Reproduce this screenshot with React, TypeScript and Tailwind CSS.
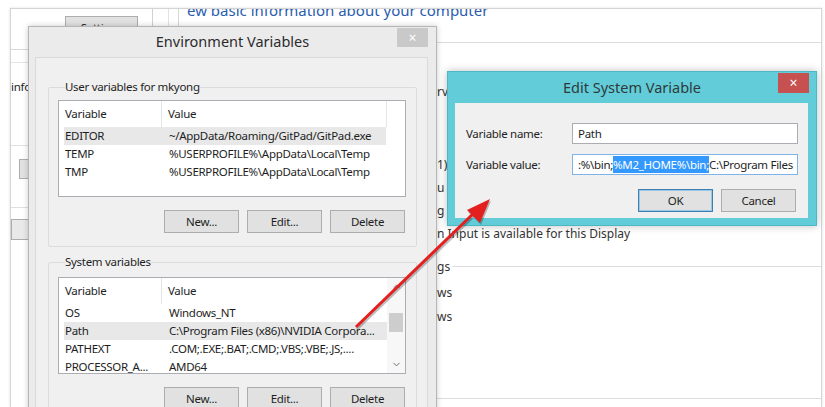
import React from 'react'
import { ChevronUp, ChevronDown } from 'lucide-react'

type Row = [string, string]

const userRows: Row[] = [
  ['EDITOR', '~/AppData/Roaming/GitPad/GitPad.exe'],
  ['TEMP', '%USERPROFILE%\\AppData\\Local\\Temp'],
  ['TMP', '%USERPROFILE%\\AppData\\Local\\Temp'],
]

const sysRows: Row[] = [
  ['OS', 'Windows_NT'],
  ['Path', 'C:\\Program Files (x86)\\NVIDIA Corpora...'],
  ['PATHEXT', '.COM;.EXE;.BAT;.CMD;.VBS;.VBE;.JS;....'],
  ['PROCESSOR_A...', 'AMD64'],
]

function Btn({ label, def }: { label: string; def?: boolean }) {
  return (
    <div
      className={`h-[23px] w-[75px] flex items-center justify-center bg-[#e1e1e1] border text-[#1e1e1e] ${
        def ? 'border-[#3c7fb1] shadow-[inset_0_0_0_1px_#9cc6e8]' : 'border-[#adadad]'
      }`}
    >
      {label}
    </div>
  )
}

function VarList({ rows, selected, scroll }: { rows: Row[]; selected: number; scroll?: boolean }) {
  return (
    <div className="w-[348px] h-[97px] border border-[#abadb3] bg-white flex overflow-hidden">
      <div className="flex-1 flex flex-col">
        <div className="h-[26px] shrink-0 flex items-stretch">
          <div className="w-[103px] pl-[6px] flex items-center border-r border-[#e5e5e5]">Variable</div>
          <div className="pl-[6px] flex items-center">Value</div>
        </div>
        {rows.map(([k, v], i) => (
          <div
            key={k}
            className={`h-[18px] shrink-0 flex items-center ml-[5px] whitespace-nowrap ${
              i === selected ? 'bg-[#e8e8e8]' : ''
            }`}
          >
            <div className="w-[98px] pl-[1px]">{k}</div>
            <div className="pl-[7px]">{v}</div>
          </div>
        ))}
      </div>
      {scroll ? (
        <div className="w-[18px] flex flex-col items-center bg-[#f7f7f7]">
          <div className="h-[17px] shrink-0 flex items-center justify-center text-[#606060]">
            <ChevronUp size={11} strokeWidth={2} />
          </div>
          <div className="flex-1 w-full flex flex-col items-center">
            <div className="mt-[18px] w-[14px] h-[19px] bg-[#cdcdcd]" />
          </div>
          <div className="h-[17px] shrink-0 flex items-center justify-center text-[#606060]">
            <ChevronDown size={11} strokeWidth={2} />
          </div>
        </div>
      ) : (
        <div className="w-[19px] h-[26px] border-l border-[#e5e5e5]" />
      )}
    </div>
  )
}

function Group({ title, rows, selected, scroll, top }: { title: string; rows: Row[]; selected: number; scroll?: boolean; top: string }) {
  return (
    <fieldset className={`w-[369px] border border-[#dcdcdc] rounded-[2px] pl-[9px] pr-[10px] pb-[13px] ${top}`}>
      <legend className="ml-[7px] leading-[16px] text-[#1e1e1e]">{title}</legend>
      <VarList rows={rows} selected={selected} scroll={scroll} />
      <div className="mt-[13px] flex justify-end gap-[8px] pr-[1px]">
        <Btn label="New..." />
        <Btn label="Edit..." />
        <Btn label="Delete" />
      </div>
    </fieldset>
  )
}

export default function App() {
  return (
    <div className="relative w-[825px] h-[407px] overflow-hidden bg-white text-[11.5px] tracking-[-0.3px] text-[#1e1e1e] font-['Noto_Sans',sans-serif]">
      {/* screenshot frame */}
      <div className="absolute left-[10px] top-[8px] right-[3px] bottom-0 border-t border-l border-r border-[#d4d4d4] shadow-[0_0_3px_rgba(0,0,0,0.12)]" />

      {/* left window, mostly hidden */}
      <div className="absolute left-[11px] top-[9px] w-[158px] bottom-0 flex flex-col border-r border-[#e2e2e2]">
        <div className="h-[41px] shrink-0 flex border-b border-[#d9d9d9]">
          <div className="ml-[54px] mt-[7px] w-[73px] h-[24px] bg-[#e1e1e1] border border-[#adadad] flex items-center justify-center">
            Settings
          </div>
          <div className="ml-auto mr-[15px] w-px bg-[#d0d0d0]" />
        </div>
        <div className="h-[13px] shrink-0 border-b border-[#e4e4e4]" />
        <div className="mt-[16px] h-[16px] flex items-center">info</div>
        <div className="h-[51px] shrink-0 border-b border-[#e0e0e0]" />
        <div className="mt-[13px] ml-[8px] w-[30px] h-[20px] bg-[#e1e1e1] border border-[#adadad]" />
        <div className="h-[29px] shrink-0 border-b border-[#e0e0e0]" />
        <div className="mt-[11px] w-[40px] h-[21px] bg-[#e9e9e9] border border-[#adadad]" />
      </div>

      {/* control panel behind */}
      <div className="absolute left-[178px] top-[9px] right-[3px] bottom-0 bg-white border-l border-r border-[#d6d6d6] flex flex-col">
        <div className="h-[34px] shrink-0 overflow-hidden border-b border-[#dcdcdc] pl-[8px]">
          <div className="-mt-[9px] text-[15px] tracking-normal leading-[20px] text-[#2a5db0] whitespace-nowrap">
            ew basic information about your computer
          </div>
        </div>
        <div className="pl-[258px] flex flex-col text-[12px] tracking-normal text-[#333] whitespace-nowrap">
          <div className="mt-[37px] h-[23px] flex items-center">rv</div>
          <div className="mt-[50px] h-[23px] flex items-center">1)</div>
          <div className="h-[23px] flex items-center">u</div>
          <div className="h-[23px] flex items-center">g S</div>
          <div className="h-[23px] flex items-center">n Input is available for this Display</div>
          <div className="mt-[10px] h-[23px] flex items-center gap-[2px]">
            <span>gs</span>
            <div className="flex-1 h-px bg-[#dcdcdc]" />
          </div>
          <div className="mt-[3px] h-[24px] flex items-center">ws</div>
          <div className="h-[24px] flex items-center">ws</div>
          <div className="mt-[69px] h-px bg-[#dcdcdc]" />
        </div>
      </div>

      {/* Environment Variables dialog */}
      <div className="absolute left-[28px] top-[26px] w-[409px] h-[400px] bg-[#ebebeb] border border-[#b5b5b5] shadow-[0_0_6px_rgba(0,0,0,0.2)]">
        <div className="relative h-[30px] flex items-center justify-center text-[14.5px] tracking-normal text-[#2b2b2b]">
          Environment Variables
          <div className="absolute right-[8px] top-[1px] w-[31px] h-[19px] bg-[#c9c9c9] text-white text-[14px] leading-none flex items-center justify-center">
            ×
          </div>
        </div>
        <div className="ml-[6px] mr-[8px] h-[400px] bg-[#f0f0f0] border border-[#dadada] pl-[12px] pr-[10px] pt-[21px] flex flex-col">
          <Group title="User variables for mkyong" rows={userRows} selected={0} top="pt-[5px]" />
          <Group title="System variables" rows={sysRows} selected={1} scroll top="mt-[7px] pt-[7px]" />
        </div>
      </div>

      {/* Edit System Variable dialog */}
      <div className="absolute left-[447px] top-[71px] w-[370px] h-[155px] bg-[#62cdd8] border border-[#4cb8c4] shadow-[0_0_8px_rgba(0,0,0,0.25)] flex flex-col">
        <div className="relative h-[31px] shrink-0 flex items-center justify-center text-[14.5px] tracking-normal text-[#2f3a3c]">
          Edit System Variable
          <div className="absolute right-[7px] top-[1px] w-[31px] h-[20px] bg-[#c75050] text-white text-[14px] leading-none flex items-center justify-center">
            ×
          </div>
        </div>
        <div className="ml-[7px] mr-[8px] h-[115px] bg-[#f0f0f0] pt-[20px] pl-[11px] pr-[10px] flex flex-col">
          <div className="flex items-center">
            <div className="w-[106px]">Variable name:</div>
            <div className="w-[226px] h-[21px] bg-white border border-[#abadb3] pl-[5px] flex items-center">Path</div>
          </div>
          <div className="mt-[10px] flex items-center">
            <div className="w-[106px]">Variable value:</div>
            <div className="w-[226px] h-[21px] bg-white border border-[#7eb4ea] pl-[5px] flex items-center overflow-hidden whitespace-nowrap">
              <span>:%\bin;</span>
              <span className="bg-[#3399ff] text-white">%M2_HOME%\bin;</span>
              <span>C:\Program Files</span>
            </div>
          </div>
          <div className="mt-[14px] flex justify-end gap-[8px] pr-[2px]">
            <Btn label="OK" def />
            <Btn label="Cancel" />
          </div>
        </div>
      </div>

      {/* red arrow */}
      <svg className="absolute inset-0 pointer-events-none" width="825" height="407">
        <line x1="357" y1="329" x2="477" y2="213" stroke="rgba(0,0,0,0.25)" strokeWidth="3" />
        <polygon points="491,201 468,212 481,225" fill="rgba(0,0,0,0.25)" />
        <line x1="356" y1="327" x2="476" y2="211" stroke="#e3201f" strokeWidth="3" />
        <polygon points="490,199 467,210 480,223" fill="#e3201f" />
      </svg>
    </div>
  )
}
